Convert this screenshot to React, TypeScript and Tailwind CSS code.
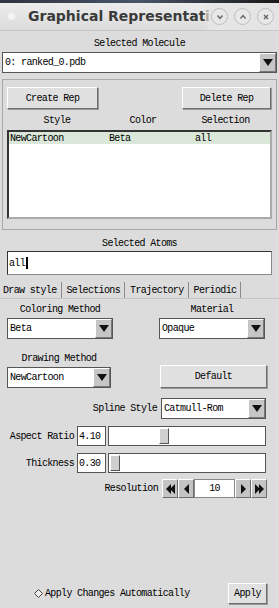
import React from "react";

const mono = {
  fontFamily: '"Liberation Mono", "DejaVu Sans Mono", monospace',
  fontSize: "10px",
  letterSpacing: "-0.65px",
};

function Arrow() {
  return (
    <svg width="10" height="7" viewBox="0 0 10 7">
      <polygon points="0,0 10,0 5,7" fill="#111" />
    </svg>
  );
}

function Dropdown({ value, className = "" }: { value: string; className?: string }) {
  return (
    <div className={`flex h-[21px] border border-[#555] bg-white ${className}`}>
      <div className="flex-1 flex items-center pl-[2px] text-black truncate">{value}</div>
      <div className="w-[17px] flex items-center justify-center bg-[#c6c6c6] border-l border-t border-l-white border-t-white border-r border-b border-r-[#777] border-b-[#777]">
        <Arrow />
      </div>
    </div>
  );
}

function Btn({ label, className = "" }: { label: string; className?: string }) {
  return (
    <div
      className={`flex items-center justify-center bg-[#e0e0e0] border border-t-white border-l-white border-r-[#6e6e6e] border-b-[#6e6e6e] shadow-[1px_1px_0_#9a9a9a] text-black ${className}`}
    >
      {label}
    </div>
  );
}

function Step({ dir, double }: { dir: "l" | "r"; double?: boolean }) {
  const tri = dir === "l" ? "5,0 5,10 0,5" : "0,0 0,10 5,5";
  return (
    <div className="w-[16px] h-full flex items-center justify-center bg-[#c4c4c4] border border-t-white border-l-white border-r-[#6e6e6e] border-b-[#6e6e6e]">
      <svg width={double ? 9 : 5} height="10" viewBox={double ? "0 0 9 10" : "0 0 5 10"}>
        <polygon points={tri} fill="#111" />
        {double && <polygon points={dir === "l" ? "9,0 9,10 4,5" : "4,0 4,10 9,5"} fill="#111" />}
      </svg>
    </div>
  );
}

function Slider({ value, thumb }: { value: string; thumb: number }) {
  return (
    <div className="flex h-[20px]">
      <div className="w-[29px] border border-[#555] bg-white flex items-center pl-[1px]">{value}</div>
      <div className="flex-1 ml-[2px] border border-[#555] bg-white relative">
        <div
          className="absolute top-[1px] bottom-[1px] w-[10px] bg-[#cfcfcf] border border-t-white border-l-white border-r-[#555] border-b-[#555]"
          style={{ left: thumb }}
        />
      </div>
    </div>
  );
}

export default function App() {
  return (
    <div className="w-[279px] h-[608px] bg-[#dcdcdc] flex flex-col overflow-hidden text-black" style={mono}>
      {/* title bar */}
      <div className="h-[3px] bg-gradient-to-r from-[#2e3440] via-[#4a5568] to-[#1a1a1a]" />
      <div className="h-[28px] flex items-center bg-gradient-to-b from-[#ececec] to-[#dcdcdc] border-b border-[#c8c8c8] relative overflow-hidden">
        <div className="w-[7px] h-[7px] rounded-full bg-[#f4f4f4] ml-[8px] shrink-0" />
        <div
          className="ml-[13px] text-[14px] font-bold text-[#3a3a3a] whitespace-nowrap"
          style={{ fontFamily: '"DejaVu Sans", "Noto Sans", sans-serif', letterSpacing: 0 }}
        >
          Graphical Representation
        </div>
        <div className="absolute right-0 top-0 bottom-0 flex items-center pr-[5px] pl-[8px] bg-gradient-to-r from-transparent via-[#e6e6e6] via-[7px] to-[#e4e4e4]">
          {["v", "^", "x"].map((k, i) => (
            <div
              key={k}
              className={`w-[17px] h-[17px] shrink-0 rounded-full border border-[#bdbdbd] bg-[#e8e8e8] flex items-center justify-center ${i > 0 ? "ml-[6px]" : ""}`}
            >
              <svg width="8" height="8" viewBox="0 0 8 8">
                {k === "v" && <polyline points="1.5,2.5 4,5.5 6.5,2.5" fill="none" stroke="#666" strokeWidth="1.4" />}
                {k === "^" && <polyline points="1.5,5.5 4,2.5 6.5,5.5" fill="none" stroke="#666" strokeWidth="1.4" />}
                {k === "x" && <path d="M2 2 L6 6 M6 2 L2 6" stroke="#666" strokeWidth="1.4" />}
              </svg>
            </div>
          ))}
        </div>
      </div>

      {/* selected molecule */}
      <div className="text-center mt-[7px] leading-[11px]">Selected Molecule</div>
      <Dropdown value="0: ranked_0.pdb" className="mx-[2px] mt-[3px] h-[21px]" />

      {/* reps frame */}
      <div className="mx-[2px] mt-[6px] h-[151px] border border-[#a8a8a8] px-[4px] pt-[7px]">
        <div className="flex justify-between">
          <Btn label="Create Rep" className="w-[91px] h-[22px]" />
          <Btn label="Delete Rep" className="w-[89px] h-[22px] mr-[1px]" />
        </div>
        <div className="flex mt-[6px] leading-[11px]">
          <div className="w-[100px] text-center">Style</div>
          <div className="w-[72px] text-center">Color</div>
          <div className="flex-1 text-center">Selection</div>
        </div>
        <div className="mt-[4px] h-[89px] border-2 border-t-[#333] border-l-[#333] border-r-[#aaa] border-b-[#aaa] bg-white">
          <div className="flex h-[12px] items-center bg-[#dbe8d9]">
            <div className="w-[100px] pl-[1px]">NewCartoon</div>
            <div className="w-[86px]">Beta</div>
            <div className="flex-1">all</div>
          </div>
        </div>
      </div>

      {/* selected atoms */}
      <div className="text-center mt-[8px] leading-[11px]">Selected Atoms</div>
      <div className="mx-[7px] mt-[2px] h-[24px] border border-t-[#333] border-l-[#333] border-r-[#888] border-b-[#888] bg-white flex items-center pl-[1px]">
        all<span className="inline-block w-[2px] h-[12px] bg-black ml-[1px]" />
      </div>

      {/* tabs */}
      <div className="flex mt-[7px] h-[17px] items-stretch border-b border-[#c4c4c4]">
        {["Draw style", "Selections", "Trajectory", "Periodic"].map((t, i) => (
          <div
            key={t}
            className={`flex items-center border-r border-[#8a8a8a] pr-[4px] ${i === 0 ? "pl-[3px]" : "pl-[5px]"}`}
          >
            {t}
          </div>
        ))}
      </div>

      {/* draw style panel */}
      <div className="flex justify-between px-[7px] mt-[5px]">
        <div className="w-[106px] flex flex-col">
          <div className="text-center leading-[11px]">Coloring Method</div>
          <Dropdown value="Beta" className="mt-[3px] h-[20px]" />
        </div>
        <div className="w-[106px] flex flex-col mr-[7px]">
          <div className="text-center leading-[11px]">Material</div>
          <Dropdown value="Opaque" className="mt-[3px] h-[20px]" />
        </div>
      </div>

      <div className="flex justify-between items-end px-[7px] mt-[14px]">
        <div className="w-[104px] flex flex-col">
          <div className="text-center leading-[11px]">Drawing Method</div>
          <Dropdown value="NewCartoon" className="mt-[3px] h-[20px]" />
        </div>
        <Btn label="Default" className="w-[107px] h-[23px] mr-[5px]" />
      </div>

      <div className="flex items-center justify-end pr-[13px] mt-[10px]">
        <div className="mr-[4px]">Spline Style</div>
        <Dropdown value="Catmull-Rom" className="w-[105px] h-[21px]" />
      </div>

      <div className="flex items-center mt-[7px] pr-[13px]">
        <div className="w-[77px] text-right pr-[3px]">Aspect Ratio</div>
        <div className="flex-1">
          <Slider value="4.10" thumb={50} />
        </div>
      </div>
      <div className="flex items-center mt-[7px] pr-[13px]">
        <div className="w-[77px] text-right pr-[3px]">Thickness</div>
        <div className="flex-1">
          <Slider value="0.30" thumb={1} />
        </div>
      </div>

      <div className="flex items-center justify-end pr-[12px] mt-[6px] h-[19px]">
        <div className="mr-[4px]">Resolution</div>
        <div className="flex h-[19px]">
          <Step dir="l" double />
          <Step dir="l" />
          <div className="w-[41px] bg-white border border-[#888] flex items-center justify-center">10</div>
          <Step dir="r" />
          <Step dir="r" double />
        </div>
      </div>

      <div className="flex-1" />

      <div className="flex items-center justify-between pl-[34px] pr-[12px] mb-[4px]">
        <div className="flex items-center">
          <svg width="9" height="9" viewBox="0 0 9 9" className="mr-[2px]">
            <polygon points="4.5,0.5 8.5,4.5 4.5,8.5 0.5,4.5" fill="#eee" stroke="#444" strokeWidth="1" />
          </svg>
          Apply Changes Automatically
        </div>
        <Btn label="Apply" className="w-[39px] h-[21px] bg-[#d2d2d2]" />
      </div>
    </div>
  );
}
